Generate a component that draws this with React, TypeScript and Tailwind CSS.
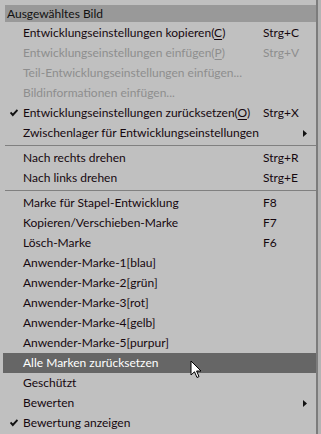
import React from "react";

type Item = {
  label: React.ReactNode;
  shortcut?: string;
  disabled?: boolean;
  checked?: boolean;
  submenu?: boolean;
  active?: boolean;
};

type Entry = Item | "sep";

const u = (c: string) => <span className="underline underline-offset-[2px]">{c}</span>;

const entries: Entry[] = [
  { label: <>Entwicklungseinstellungen kopieren({u("C")})</>, shortcut: "Strg+C" },
  { label: <>Entwicklungseinstellungen einfügen({u("P")})</>, shortcut: "Strg+V", disabled: true },
  { label: "Teil-Entwicklungseinstellungen einfügen...", disabled: true },
  { label: "Bildinformationen einfügen...", disabled: true },
  { label: <>Entwicklungseinstellungen zurücksetzen({u("O")})</>, shortcut: "Strg+X", checked: true },
  { label: "Zwischenlager für Entwicklungseinstellungen", submenu: true },
  "sep",
  { label: "Nach rechts drehen", shortcut: "Strg+R" },
  { label: "Nach links drehen", shortcut: "Strg+E" },
  "sep",
  { label: "Marke für Stapel-Entwicklung", shortcut: "F8" },
  { label: "Kopieren/Verschieben-Marke", shortcut: "F7" },
  { label: "Lösch-Marke", shortcut: "F6" },
  { label: "Anwender-Marke-1[blau]" },
  { label: "Anwender-Marke-2[grün]" },
  { label: "Anwender-Marke-3[rot]" },
  { label: "Anwender-Marke-4[gelb]" },
  { label: "Anwender-Marke-5[purpur]" },
  { label: "Alle Marken zurücksetzen", active: true },
  { label: "Geschützt" },
  { label: "Bewerten", submenu: true },
  { label: "Bewertung anzeigen", checked: true },
];

function Check() {
  return (
    <svg width="8" height="8" viewBox="0 0 8 8" className="ml-[7px]">
      <path d="M0.5 3.5 L2.8 6 L7.5 1" fill="none" stroke="#111" strokeWidth="1.9" />
    </svg>
  );
}

function Arrow() {
  return (
    <svg width="4" height="7" viewBox="0 0 4 7">
      <path d="M0 0 L4 3.5 L0 7 Z" fill="#111" />
    </svg>
  );
}

// mouse pointer over the highlighted row
function Cursor() {
  return (
    <svg width="13" height="20" viewBox="0 0 13 20" className="absolute left-[187px] top-[7px]">
      <path
        d="M1 1 L1 15 L4.5 11.8 L7 17.5 L9 16.6 L6.6 11 L11 11 Z"
        fill="#fff"
        stroke="#000"
        strokeWidth="1"
      />
    </svg>
  );
}

function Row({ item }: { item: Item }) {
  const color = item.active
    ? "text-white bg-[#666666]"
    : item.disabled
    ? "text-[#8e8e8e]"
    : "text-[#16080f]";
  return (
    <div className={"relative flex h-[20px] items-center ml-[3px] " + color}>
      <div className="w-[20px] flex items-center">{item.checked && <Check />}</div>
      <div className="flex-1 whitespace-nowrap">{item.label}</div>
      <div className="w-[40px] whitespace-nowrap">{item.shortcut}</div>
      <div className="w-[13px] flex items-center">{item.submenu && <Arrow />}</div>
      {item.active && <Cursor />}
    </div>
  );
}

export default function App() {
  return (
    <div className="w-[321px] h-[434px] bg-[#b4b4b4] flex overflow-hidden font-[Lato,sans-serif]">
      <div className="w-[316px] bg-[#c0c0c0] pt-[5px] text-[12px] leading-none">
        <div className="ml-[5px] h-[17px] bg-[#999999] flex items-center pl-[2px] text-[#111]">
          Ausgewähltes Bild
        </div>
        <div className="h-[1px]" />
        {entries.map((e, i) =>
          e === "sep" ? (
            <div key={i} className="h-[5px] pt-[2px] ml-[5px]">
              <div className="h-[1px] bg-[#808080]" />
            </div>
          ) : (
            <Row key={i} item={e} />
          )
        )}
      </div>
      <div className="w-[2px] bg-[#7c7c7c]" />
    </div>
  );
}
